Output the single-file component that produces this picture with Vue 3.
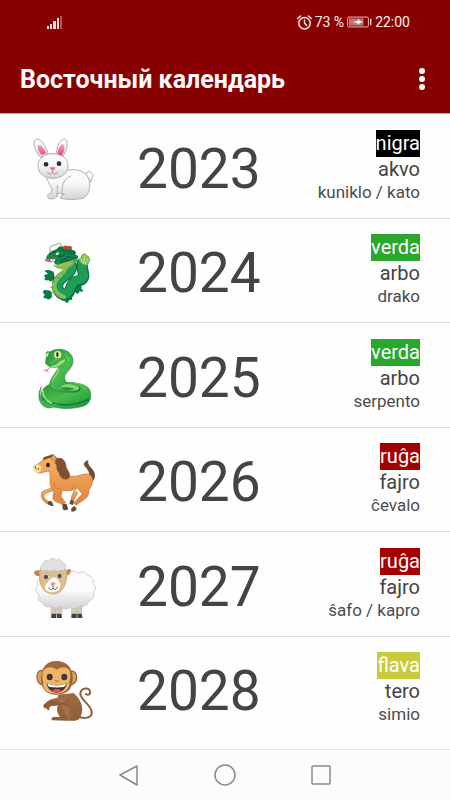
<script setup>
const years = [
  { year: 2023, animal: 'rabbit', color: 'nigra', tone: 'black', element: 'akvo', name: 'kuniklo / kato' },
  { year: 2024, animal: 'dragon', color: 'verda', tone: 'green', element: 'arbo', name: 'drako' },
  { year: 2025, animal: 'snake', color: 'verda', tone: 'green', element: 'arbo', name: 'serpento' },
  { year: 2026, animal: 'horse', color: 'ruĝa', tone: 'red', element: 'fajro', name: 'ĉevalo' },
  { year: 2027, animal: 'sheep', color: 'ruĝa', tone: 'red', element: 'fajro', name: 'ŝafo / kapro' },
  { year: 2028, animal: 'monkey', color: 'flava', tone: 'yellow', element: 'tero', name: 'simio' },
]
</script>

<template>
  <div class="screen">
    <header class="top">
      <div class="status">
        <svg class="signal" viewBox="0 0 16 14" aria-hidden="true">
          <path d="M0 11h2v3H0zM3 9h2v5H3zM6 6h3v8H6zM10 3h2v11h-2z" fill="#f3dcd8" />
          <path d="M13 1h2v13h-2z" fill="#b05a58" />
        </svg>
        <div class="status-right">
          <svg class="alarm" viewBox="0 0 42 42" fill="none" stroke="#fff0ea" stroke-width="4" stroke-linecap="round" aria-hidden="true">
            <circle cx="21" cy="23" r="16" />
            <path d="M2 10l8-7M40 10l-8-7M21 14v9l6 6" />
          </svg>
          <span>73 %</span>
          <svg class="battery" viewBox="0 0 76 34" aria-hidden="true">
            <rect x="2" y="2" width="63" height="30" rx="4" fill="none" stroke="#e8bdb8" stroke-width="3" />
            <rect x="6" y="6" width="44" height="22" fill="#bb7470" />
            <path d="M17 17l15-3 2-6 5 6 12 3-13 3-3 6-4-6z" fill="#fff" />
            <path d="M72 9v16" stroke="#f3dcd8" stroke-width="4" stroke-linecap="round" />
          </svg>
          <span>22:00</span>
        </div>
      </div>
      <div class="bar">
        <h1>Восточный календарь</h1>
        <button class="more" type="button" aria-label="Меню">
          <svg viewBox="0 0 6 22" aria-hidden="true">
            <circle cx="3" cy="3" r="3" /><circle cx="3" cy="11" r="3" /><circle cx="3" cy="19" r="3" />
          </svg>
        </button>
      </div>
    </header>

    <ul class="list">
      <li v-for="y in years" :key="y.year" class="row">
        <svg class="animal" viewBox="0 -26 240 264" stroke-linecap="round" stroke-linejoin="round" aria-hidden="true">
          <g v-if="y.animal === 'rabbit'">
            <defs>
              <linearGradient id="fur" x1="0" y1="0" x2="0" y2="1"><stop offset=".4" stop-color="#fafafa" /><stop offset="1" stop-color="#d4d4d4" /></linearGradient>
              <linearGradient id="ear" x1="0" y1="0" x2="0" y2="1"><stop offset="0" stop-color="#f9a9bd" /><stop offset="1" stop-color="#ea4478" /></linearGradient>
            </defs>
            <g stroke="#b2b2b2" stroke-width="3" fill="url(#fur)">
              <path d="M184 130c2-12 13-10 15-3 7 3 6 12 1 17 3 10-7 13-13 9z" />
              <path d="M63 133c2 18 14 30 18 43l-3 12c-9 0-13 6-8 15 8 4 21 1 26-6l5-10 18 4c-9 0-15 5-12 12 15 5 45 3 65 1 22-8 28-44 17-64-9-19-33-26-58-22-14 2-21 8-28 18z" />
              <path d="M137 136c-22 9-28 30-25 53M97 164l-1 34" fill="none" />
              <path d="M46 79C29 63 22 30 32 26c15-5 32 21 37 43zM94 68c1-24 13-43 25-43 12 2 10 35-7 54z" />
              <path d="M83 69c29 0 46 15 46 36 0 23-19 38-46 38-25 0-44-15-44-38 0-21 18-36 44-36z" />
            </g>
            <path d="M50 73C37 58 35 45 40 43c11-2 20 14 23 25zM98 69c1-17 8-29 16-29 8 3 5 24-5 35z" fill="url(#ear)" />
            <circle cx="63" cy="101" r="7" fill="#302c2c" /><circle cx="102" cy="99" r="7" fill="#302c2c" />
            <path d="M75 110h16c-1 6-5 9-8 9s-7-3-8-9z" fill="#f06493" />
            <path d="M83 118v5M68 125c3 7 11 6 15 0 4 6 12 7 15-1" fill="none" stroke="#b88391" stroke-width="3" />
          </g>

          <g v-else-if="y.animal === 'dragon'">
            <path d="M80 172c-12-10-18-2-18-7-9 1-11 12-1 15-10 5-5 14 3 10 3 9 13 2 17-3zM86 112c-14-8-22-7-27-2 5 3 9 5 9 9-12 0-13 8-6 9-7 5-2 12 8 8 5 8 14 2 20-4zM143 150c-1 12 5 20 9 22 2 10 12 4 11-2 13 5 15-6 5-7 7-5-1-12-11-10zM125 181c-6 3-13 2-14 10-5 6 3 10 9 7 2 12 13 5 12-2 12 2 14-7 3-9z" fill="#087b45" />
            <g fill="none">
              <path d="M138 92c6 24-28 31-38 51-8 20 6 38 22 37 19-4 10-29 28-38 15-7 24-2 26-17 1-13-7-20-4-38" stroke="#0b7042" stroke-width="34" />
              <path d="M139 92c6 24-27 31-38 51-8 20 7 37 22 35 17-5 10-30 27-39 15-7 24-2 26-15 0-13-7-20-4-37" stroke="#1f9d55" stroke-width="26" />
              <path d="M121 100c-3 18-24 23-32 44-7 19 9 37 27 43" stroke="#83bd58" stroke-width="13" />
              <path d="M116 119l-10-5M103 131l-9-5M90 142l-9-3M85 156l-8 2M91 171l-8 4M103 182l-6 5" stroke="#5aa14c" stroke-width="3" />
            </g>
            <path d="M164 82c-5-7 1-12 4-15-2-7 6-9 13-12 2 7 8 7 13 13 4 11-2 18-8 25z" fill="#7dc059" />
            <path d="M175 88l5-24M180 88l9-16M171 84l-1-11" stroke="#dce897" stroke-width="3" />
            <path d="M71 57c8-12 21-8 27-17 7-9 19-5 23-1 10-8 18-1 20 7 11 0 15 9 9 14 10 1 11 8 6 12 5 8-4 15-12 12l-30 12-22-8-18-18z" fill="#087640" />
            <path d="M64 67c4-13 16-11 25-15 9-6 25-4 33 4 13 12 13 27 1 36l-35-3 6-14-22 3c-8 1-9-6-8-11z" fill="#14884b" />
            <path d="M99 63c7 5 15 3 20-5M108 77c10-1 16-4 21-11M109 84l28-9" stroke="#075f3b" stroke-width="4" fill="none" />
            <path d="M76 57c8-7 16-4 19 2" stroke="#075f3b" stroke-width="4" fill="none" />
            <path d="M91 57l9-5 2 6-7 4z" fill="#ecf4cf" />
            <path d="M61 76c12-4 18 3 29-3M66 79c9 1 16 1 22-1" fill="none" stroke="#ed5963" stroke-width="5" />
            <path d="M76 77l3-5 5 4 5-4 1 6-7 3z" fill="#fff3ef" />
            <path d="M83 91c21 4 25-8 42-10 15-2 21-10 39-9-8 6-9 10-17 12 1 8-8 8-12 12-3 7-10 5-14 9-9-1-28-2-38-14z" fill="#80b751" />
            <path d="M101 97l33-15M111 101l28-16M91 94l27-7" stroke="#b8cf70" stroke-width="2" />
            <path d="M114 42c-2-8 8-12 13-7 7-5 13 0 15 5l-7 5z" fill="#b34d32" />
            <path d="M129 61l24 5M127 70l25 8" stroke="#278d48" stroke-width="3" fill="none" />
            <path d="M79 54c-8-13-5-18 4-21 8-3 12-2 15-6M99 28c7-8 13 3 7 8" fill="none" stroke="#8fa65e" stroke-width="3" />
          </g>

          <g v-else-if="y.animal === 'snake'">
            <defs>
              <linearGradient id="scale" x1="0" y1="0" x2="1" y2="1"><stop offset="0" stop-color="#2b933c" /><stop offset=".5" stop-color="#48bd4b" /><stop offset="1" stop-color="#178c3c" /></linearGradient>
            </defs>
            <path d="M75 81c-2 9-8 10-17 11M65 92l4 5" fill="none" stroke="#ed5b64" stroke-width="3" />
            <path d="M95 134c31-11 83-6 98 14 8 16 5 41-12 49-36 15-97 11-118-5-25-17-18-48 14-59z" fill="url(#scale)" stroke="#249340" stroke-width="2" />
            <path d="M54 175c34 28 92 26 137 4" fill="none" stroke="#08803b" stroke-width="5" />
            <path d="M105 143c26-11 48-9 61 0 5 11-8 18-33 15-14 0-24-5-28-15z" fill="#15813a" />
            <path d="M108 140c20-6 45-4 53 5-17 5-34-3-53-5z" fill="#087136" />
            <path d="M49 142c-12 28 2 44 19 50 10 5 28-4 30 1-2 5-9 7-19 11-23 5-39-17-37-37 0-10 3-18 7-25z" fill="#44b74c" stroke="#208a3a" stroke-width="2" />
            <path d="M53 151c0 18 9 32 27 39" fill="none" stroke="#a7e08c" stroke-width="5" />
            <path d="M64 45c-3-7 3-12 10-8 23-15 56-9 67 13 13 31-20 45-22 62-3 17 19 27 46 31-14 17-69 22-87 0-13-18 15-41 24-62-20 5-33 0-40-10z" fill="url(#scale)" stroke="#238c3d" stroke-width="2" />
            <path d="M76 78c20 3 25-15 43-19 3 7-7 14-16 18 2 17-27 39-21 57 5 12 18 14 27 10-31 6-34-17-15-36 9-12 11-20 8-29-9 3-20 6-26-1z" fill="#a2dd86" />
            <path d="M109 139c2 12 17 13 34 14 21 0 25-11 11-15-13-4-31-7-45 1z" fill="#8bd777" />
            <path d="M111 143c15 0 29 1 38 4-8 6-35 7-38-4z" fill="#208f3e" />
            <circle cx="98" cy="45" r="11" fill="#e3efa0" /><path d="M97 36c6 5 4 14 0 17-6-7-4-13 0-17z" fill="#253b1e" />
            <path d="M63 49c0-8 4-11 9-10-3 7-3 11-6 14z" fill="#dcea97" />
            <path d="M75 71c10-3 12-10 20-12M120 45c6 3 11 10 10 19M151 131c21 1 28 10 30 20" fill="none" stroke="#75ce67" stroke-width="3" />
          </g>

          <g v-else-if="y.animal === 'horse'">
            <defs><linearGradient id="coat" x1="0" y1="0" x2="0" y2="1"><stop offset="0" stop-color="#ffb163" /><stop offset="1" stop-color="#dc8540" /></linearGradient></defs>
            <path d="M183 105c17-10 10-23 1-33-10-10-7-18 5-21-5 14 14 22 19 38 3 16-6 29-20 29z" fill="#714a32" stroke="#593a2a" stroke-width="2" />
            <g fill="url(#coat)" stroke="#bd7134" stroke-width="2">
              <path d="M88 138c-9 8-25 7-30 15-5 8 6 16 13 21l-3 7c-13-5-24-23-17-35 5-7 19-8 28-13zM157 147c2 6-7 10-10 22l-9 2c1-15 7-24 10-31z" />
              <path d="M75 40l13-5 9 11c11 12 22 27 30 50 20 5 34 0 52-5 24-3 30 20 17 41-7 8-2 16-8 25-6 11-21 16-34 27l-7-5c9-11 14-19 25-27-5-8-10-11-14-18-19 9-30 6-47 8l-3 16c4 7 8 10 13 19l-8 5c-14-6-29-9-29-19-2-8 4-13 2-22-19-16-6-44-13-58-11-3-22 9-37 4-9-4-13-12-9-20 12-1 20-20 48-27z" />
            </g>
            <path d="M30 64c10-3 22 0 19 12-3 16-21 14-25 3-1-6 1-11 6-15z" fill="#ffe0a6" />
            <path d="M31 69l2 7M41 74l-2 4" stroke="#765033" stroke-width="3" />
            <path d="M54 50c-2-14 16-11 23-17 7-3 11 4 10 10-11-5-20 1-33 7z" fill="#76472f" />
            <path d="M94 45c21-7 28 10 29 25 4 11 18 23 6 35-18 5-24-8-27-20-10-8-2-19-10-25z" fill="#80502f" stroke="#67412b" stroke-width="2" />
            <path d="M78 43l7-11 8 9-1 14z" fill="#f4a25a" stroke="#a76031" stroke-width="2" />
            <ellipse cx="69" cy="64" rx="6" ry="7" fill="#2f292b" />
            <path d="M71 172l9 1 6 13c-7 2-14-1-18-5zM112 181l12-1 6 16c-7 5-13 5-17-1zM137 168l11 3-4 13-11-3zM148 187l7 8c-1 5-8 9-15 9-4-8 0-13 8-17z" fill="#684a3c" />
            <path d="M87 118c1 14 9 18 21 18M142 136c2-7 6-11 11-12" fill="none" stroke="#bd743c" stroke-width="2" />
          </g>

          <g v-else-if="y.animal === 'sheep'">
            <defs><linearGradient id="wool" x1="0" y1="0" x2="0" y2="1"><stop offset=".5" stop-color="#fbfbfb" /><stop offset="1" stop-color="#d2d2d2" /></linearGradient></defs>
            <path d="M79 170h14v30H79zM97 169h13v30H97zM141 170h14v30h-14zM158 169h12v30h-12z" fill="#d7c9b7" stroke="#b5aa9e" stroke-width="2" />
            <path d="M80 195h14v13H78zM96 195h13l2 13H96zM140 195h15v13h-16zM157 195h13l3 13h-16z" fill="#424242" />
            <path d="M123 76c13-12 28-9 38-3 13-7 25 0 30 9 11 0 16 13 13 23 10 8 8 20 1 28 5 13-4 21-14 24-3 14-14 17-24 15-10 10-22 11-31 3-8 8-21 8-28 0-9 9-22 7-29-2-13 5-23-1-27-12-13-2-15-14-9-22-14-9-13-22-3-30-7-9-1-20 8-24z" fill="url(#wool)" stroke="#b9b9b9" stroke-width="2" />
            <path d="M43 65c-9-2-18 3-15 11 4 7 13 7 22 5zM125 65c9-8 15-4 12 4-2 9-9 13-18 11z" fill="#bd8750" />
            <path d="M46 61c-8 31 0 71 36 75 34 4 51-47 41-74z" fill="#dfbd8b" stroke="#bca077" stroke-width="2" />
            <path d="M76 92c5-7 16-8 21-1 6 9 13 16 7 28-6 14-35 17-43 2-5-11 7-20 15-29z" fill="#fff" />
            <circle cx="63" cy="85" r="8" fill="#534f50" stroke="#f9eedc" stroke-width="2" /><circle cx="104" cy="82" r="8" fill="#534f50" stroke="#f9eedc" stroke-width="2" />
            <path d="M77 105c1-5 12-5 15-1-1 5-5 7-8 8-3-1-6-3-7-7z" fill="#ed9285" />
            <path d="M84 112v6M72 117c1 7 9 9 12 1 4 8 11 4 13-3" fill="none" stroke="#575255" stroke-width="3" />
            <path d="M48 63c-4-9 1-15 8-17-1-9 7-14 15-10 7-11 20-6 23-1 8-5 16-1 17 8 10-1 15 8 10 15 0 7-8 11-15 6-7 5-14 5-20 0-8 5-15 5-22 0-6 5-14 4-16-1z" fill="#e1e1e1" stroke="#bababa" stroke-width="2" />
          </g>

          <g v-else>
            <defs><linearGradient id="brown" x1="0" y1="0" x2="0" y2="1"><stop offset="0" stop-color="#a3683b" /><stop offset="1" stop-color="#8e5d37" /></linearGradient></defs>
            <path d="M165 194c26 6 37-4 35-16-1-22-36-38-34-56 2-15 26-21 29-6 2 10-7 13-12 8" fill="none" stroke="#8d613f" stroke-width="6" />
            <path d="M99 126l47-5c18 16 35 42 20 73-6 12-21 11-39 10l-46-1c-4-4 0-10 7-10h17c-11-15-10-27-6-37-10 2-18 3-24 5l-3 11c-3 4-8-3-7-10-6 2-9-5-3-11 9-12 24-13 37-16z" fill="url(#brown)" />
            <path d="M62 160c8-7 16-7 31-8" fill="none" stroke="#8e5d37" stroke-width="14" />
            <path d="M95 132c16 14 33-1 33-1-3 17-16 24-29 25 17-4 35 1 39 13 9 17-1 27-9 34" fill="#a77a4e" opacity=".65" />
            <path d="M100 155c10-3 23-4 27-17M98 156c27-8 47 8 37 34" fill="none" stroke="#785034" stroke-width="2" />
            <path d="M56 54C43 50 34 60 36 76c2 16 12 24 25 18zM133 58c13-8 23 4 22 17-1 17-14 25-27 18z" fill="#d7a261" stroke="#9a673c" stroke-width="4" />
            <path d="M94 25c30 0 49 19 49 52 0 30-14 49-49 49-32 0-46-20-46-48 0-32 16-53 46-53z" fill="url(#brown)" />
            <path d="M94 51c17-14 45-9 42 18-1 17-5 17-2 26-5 20-19 27-37 28-26 0-41-8-43-27 2-8-2-13-2-27-2-25 25-32 42-18z" fill="#efb46b" />
            <ellipse cx="74" cy="73" rx="9" ry="10" fill="#3f3836" /><ellipse cx="118" cy="73" rx="9" ry="10" fill="#3f3836" />
            <path d="M91 84l4 2 5-2" stroke="#9b673c" stroke-width="3" fill="none" />
            <path d="M65 91c18 9 39 9 60 0-1 16-13 28-30 29-18-1-28-13-30-29z" fill="#403735" />
            <path d="M67 92c18 9 38 9 56 0-1 6-3 9-6 11-14 2-29 2-44 0-4-3-5-7-6-11z" fill="#fff" />
            <path d="M81 115c7-8 23-8 29 0-9 5-20 6-29 0z" fill="#ed4b55" />
          </g>
        </svg>
        <span class="year">{{ y.year }}</span>
        <div class="details">
          <span class="tag" :class="y.tone">{{ y.color }}</span>
          <span class="element">{{ y.element }}</span>
          <span class="name">{{ y.name }}</span>
        </div>
      </li>
    </ul>

    <nav class="nav">
      <button type="button" aria-label="Назад">
        <svg viewBox="0 0 24 24"><path d="M3 12L20 3v19z" /></svg>
      </button>
      <button type="button" aria-label="Домой">
        <svg viewBox="0 0 24 24"><circle cx="12" cy="12" r="10" /></svg>
      </button>
      <button type="button" aria-label="Недавние">
        <svg viewBox="0 0 24 24"><rect x="3" y="3" width="18" height="18" rx="1" /></svg>
      </button>
    </nav>
  </div>
</template>

<style>
body {
  margin: 0;
  background: #fefefe;
}
</style>

<style scoped>
.screen {
  display: flex;
  flex-direction: column;
  min-height: 100vh;
  font-family: Roboto, "Liberation Sans", sans-serif;
  color: #444;
}
.top {
  background: #880000;
  color: #fff;
  border-bottom: 1px solid #d9a19b;
}
.status {
  display: flex;
  align-items: center;
  justify-content: space-between;
  height: 44px;
  padding: 0 40px 0 47px;
  color: #fff0ea;
  font-size: 14px;
}
.signal {
  width: 16px;
  height: 14px;
}
.status-right {
  display: flex;
  align-items: center;
  gap: 3px;
}
.alarm {
  width: 15px;
  height: 15px;
}
.battery {
  width: 25px;
  height: 12px;
}
.bar {
  display: flex;
  align-items: center;
  justify-content: space-between;
  height: 69px;
  padding: 0 16px 0 20px;
}
h1 {
  margin: 0;
  padding-top: 2px;
  font-size: 25px;
  font-weight: 700;
  line-height: 32px;
}
button {
  display: flex;
  align-items: center;
  justify-content: center;
  padding: 0;
  border: 0;
  background: none;
}
.more {
  width: 24px;
  height: 40px;
}
.more svg {
  width: 6px;
  height: 22px;
  fill: #fff;
}
.list {
  flex: 1;
  display: grid;
  grid-auto-rows: 1fr;
  margin: 0;
  padding: 0 0 8px;
  list-style: none;
}
.row {
  display: flex;
  align-items: center;
  padding: 0 30px 0 25px;
  border-bottom: 1px solid #dedede;
}
.row:last-child {
  border-bottom-color: transparent;
}
.animal {
  flex: none;
  width: 80px;
  height: 88px;
}
.year {
  margin-left: 32px;
  padding-top: 6px;
  font-size: 55px;
  line-height: 64px;
}
.details {
  flex: 1;
  display: flex;
  flex-direction: column;
  align-items: flex-end;
  font-size: 20px;
  white-space: nowrap;
}
.tag {
  line-height: 27px;
  color: #fff;
}
.black {
  background: #000;
}
.green {
  background: #2aa82e;
}
.red {
  background: #a50000;
}
.yellow {
  background: #c8cc3c;
}
.element {
  line-height: 25px;
}
.name {
  font-size: 17px;
  line-height: 20px;
  color: #4c4c4c;
}
.nav {
  display: flex;
  align-items: center;
  justify-content: center;
  gap: 48px;
  height: 50px;
  border-top: 1px solid #e4e4e4;
  background: #fcfcfc;
}
.nav button {
  width: 48px;
  height: 48px;
}
.nav svg {
  width: 24px;
  height: 24px;
  fill: none;
  stroke: #888;
  stroke-width: 1.5;
  stroke-linejoin: round;
}
</style>
